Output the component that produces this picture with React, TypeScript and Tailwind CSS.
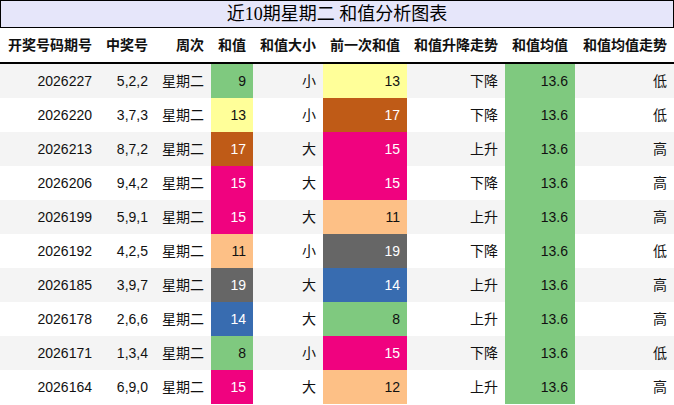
const rows = [
  { issue: '2026227', nums: '5,2,2', sum: 9, size: '小', prev: 13, trend: '下降', avg: '低' },
  { issue: '2026220', nums: '3,7,3', sum: 13, size: '小', prev: 17, trend: '下降', avg: '低' },
  { issue: '2026213', nums: '8,7,2', sum: 17, size: '大', prev: 15, trend: '上升', avg: '高' },
  { issue: '2026206', nums: '9,4,2', sum: 15, size: '大', prev: 15, trend: '下降', avg: '高' },
  { issue: '2026199', nums: '5,9,1', sum: 15, size: '大', prev: 11, trend: '上升', avg: '高' },
  { issue: '2026192', nums: '4,2,5', sum: 11, size: '小', prev: 19, trend: '下降', avg: '低' },
  { issue: '2026185', nums: '3,9,7', sum: 19, size: '大', prev: 14, trend: '上升', avg: '高' },
  { issue: '2026178', nums: '2,6,6', sum: 14, size: '大', prev: 8, trend: '上升', avg: '高' },
  { issue: '2026171', nums: '1,3,4', sum: 8, size: '小', prev: 15, trend: '下降', avg: '低' },
  { issue: '2026164', nums: '6,9,0', sum: 15, size: '大', prev: 12, trend: '上升', avg: '高' },
];

// colour per sum value
const cellColor: Record<number, string> = {
  8: 'bg-[#7fc97f] text-[#111]',
  9: 'bg-[#7fc97f] text-[#111]',
  11: 'bg-[#fdc086] text-[#111]',
  12: 'bg-[#fdc086] text-[#111]',
  13: 'bg-[#ffff99] text-[#111]',
  14: 'bg-[#386cb0] text-white',
  15: 'bg-[#f0027f] text-white',
  17: 'bg-[#bf5b17] text-white',
  19: 'bg-[#666666] text-white',
};

const headers = ['开奖号码期号', '中奖号', '周次', '和值', '和值大小', '前一次和值', '和值升降走势', '和值均值', '和值均值走势'];

const grid = 'grid grid-cols-[99px_56px_56px_42px_70px_84px_98px_70px_99px]';

export default function App() {
  return (
    <div className="w-[674px] h-[405px] bg-white text-[#111] font-['Liberation_Sans','Noto_Sans_CJK_SC',sans-serif] text-[14px] overflow-hidden">
      <div className="h-[28px] border border-black bg-[#e6e6fa] flex items-center justify-center font-['Liberation_Serif','Noto_Sans_CJK_SC',serif] text-[18px] text-black">
        近10期星期二 和值分析图表
      </div>
      <div className={`${grid} h-[36px] border-b-2 border-black font-bold`}>
        {headers.map((h) => (
          <div key={h} className="flex items-center justify-end pr-[7px] whitespace-nowrap">
            {h}
          </div>
        ))}
      </div>
      {rows.map((r, i) => (
        <div key={r.issue} className={`${grid} h-[34px] ${i % 2 === 0 ? 'bg-[#f4f4f4]' : 'bg-white'}`}>
          <div className="flex items-center justify-end pr-[7px]">{r.issue}</div>
          <div className="flex items-center justify-end pr-[7px]">{r.nums}</div>
          <div className="flex items-center justify-end pr-[7px]">星期二</div>
          <div className={`flex items-center justify-end pr-[7px] ${cellColor[r.sum]}`}>{r.sum}</div>
          <div className="flex items-center justify-end pr-[7px]">{r.size}</div>
          <div className={`flex items-center justify-end pr-[7px] ${cellColor[r.prev]}`}>{r.prev}</div>
          <div className="flex items-center justify-end pr-[7px]">{r.trend}</div>
          <div className="flex items-center justify-end pr-[7px] bg-[#7fc97f]">13.6</div>
          <div className="flex items-center justify-end pr-[7px]">{r.avg}</div>
        </div>
      ))}
    </div>
  );
}
